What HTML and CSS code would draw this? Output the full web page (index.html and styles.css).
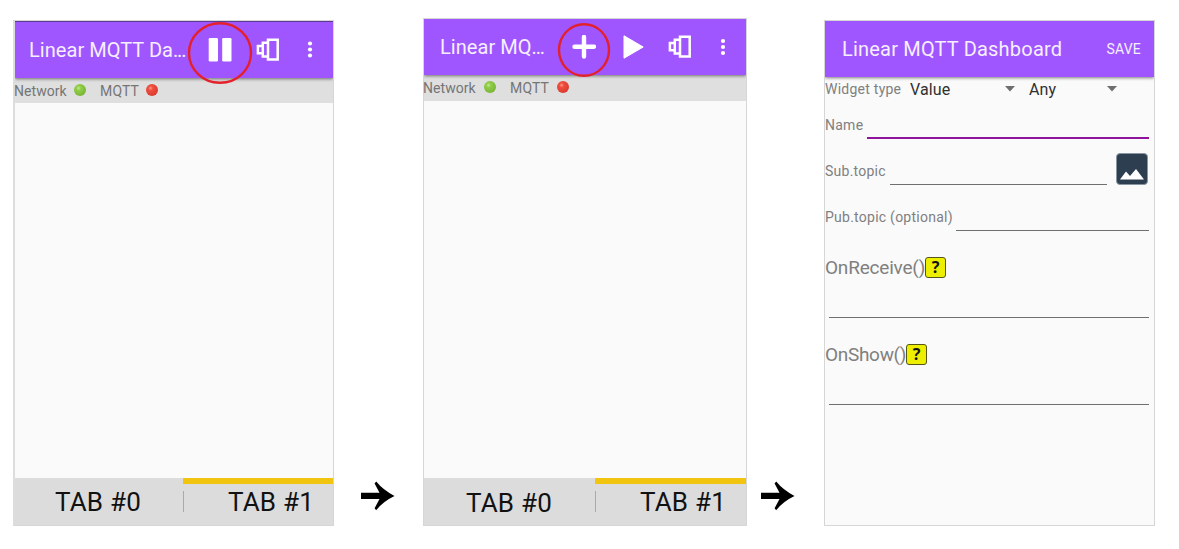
FILE: index.html
```html
<!DOCTYPE html>
<html lang="en">
<head>
<meta charset="utf-8">
<title>Linear MQTT Dashboard</title>
<link rel="stylesheet" href="styles.css">
</head>
<body>
<svg class="defs" width="0" height="0" aria-hidden="true">
  <defs>
    <radialGradient id="green" cx=".38" cy=".35" r=".65"><stop offset="0" stop-color="#c5ec8c"/><stop offset=".3" stop-color="#90cd48"/><stop offset="1" stop-color="#7bb638"/></radialGradient>
    <radialGradient id="red" cx=".38" cy=".35" r=".65"><stop offset="0" stop-color="#ff9a8c"/><stop offset=".3" stop-color="#ee4e3e"/><stop offset="1" stop-color="#dc3c2f"/></radialGradient>
    <symbol id="layers" viewBox="0 0 24 24"><path d="M12 1.700h9.700v19.800H12zM12 4.700H6.800v13.800H12M6.800 8H1.900v7.200h5" fill="none" stroke="#fff" stroke-width="2.500"/></symbol>
    <symbol id="arrow" viewBox="0 0 34 30"><path d="M0 11.700h18.500L13.600 2.500 15.200.6Q22 9 33.500 15 22 20.500 15.200 29.200L13.600 27.200 18.500 18H0z" fill="#000"/></symbol>
  </defs>
</svg>
<main class="steps">
  <section class="phone phone-run">
    <header class="bar">
      <h1 class="title">Linear MQTT Da<span class="dots">...</span></h1>
      <svg class="icon pause" width="24" height="24" viewBox="0 0 24 24"><rect x=".7" y="0" width="9.300" height="23.500" rx="1.300" fill="#fff"/><rect x="14.200" y="0" width="9.300" height="23.500" rx="1.300" fill="#fff"/></svg>
      <svg class="icon layers" width="24" height="24"><use href="#layers"/></svg>
      <svg class="icon more" width="6" height="18" viewBox="0 0 6 18"><circle cx="3" cy="2.500" r="2.100" fill="#fff"/><circle cx="3" cy="8.500" r="2.100" fill="#fff"/><circle cx="3" cy="14.500" r="2.100" fill="#fff"/></svg>
    </header>
    <div class="status"><span class="net">Network</span><svg class="led" width="12" height="12"><circle cx="6" cy="6" r="6" fill="url(#green)"/></svg><span class="mqtt">MQTT</span><svg class="led" width="12" height="12"><circle cx="6" cy="6" r="6" fill="url(#red)"/></svg></div>
    <div class="canvas"></div>
    <nav class="tabs"><div class="tab">TAB #0</div><div class="tab active">TAB #1</div></nav>
    <svg class="ring" width="66" height="64"><ellipse cx="33" cy="32" rx="31" ry="29.800"/></svg>
  </section>
  <svg class="arrow" width="34" height="30"><use href="#arrow"/></svg>
  <section class="phone phone-edit">
    <header class="bar">
      <h1 class="title">Linear MQ<span class="dots">...</span></h1>
      <svg class="icon plus" width="24" height="24" viewBox="0 0 24 24"><path d="M12 2v19.500M2.500 11.700h19.500" stroke="#fff" stroke-width="4.400" stroke-linecap="round"/></svg>
      <svg class="icon play" width="21" height="24" viewBox="0 0 21 24"><path d="M1 .8 20.200 12 1 23.200z" fill="#fff" stroke="#fff" stroke-linejoin="round"/></svg>
      <svg class="icon layers" width="24" height="24"><use href="#layers"/></svg>
      <svg class="icon more" width="6" height="18" viewBox="0 0 6 18"><circle cx="3" cy="3" r="2.100" fill="#fff"/><circle cx="3" cy="9" r="2.100" fill="#fff"/><circle cx="3" cy="15" r="2.100" fill="#fff"/></svg>
    </header>
    <div class="status"><span class="net">Network</span><svg class="led" width="12" height="12"><circle cx="6" cy="6" r="6" fill="url(#green)"/></svg><span class="mqtt">MQTT</span><svg class="led" width="12" height="12"><circle cx="6" cy="6" r="6" fill="url(#red)"/></svg></div>
    <div class="canvas"></div>
    <nav class="tabs"><div class="tab">TAB #0</div><div class="tab active">TAB #1</div></nav>
    <svg class="ring" width="54" height="56"><ellipse cx="27" cy="28" rx="25" ry="25.800"/></svg>
  </section>
  <svg class="arrow" width="34" height="30"><use href="#arrow"/></svg>
  <section class="phone phone-form">
    <header class="bar">
      <h1 class="title">Linear MQTT Dashboard</h1>
      <span class="save">SAVE</span>
    </header>
    <div class="form">
      <div class="row type-row"><span class="label">Widget type</span><span class="select select-type">Value<svg width="10" height="6"><path d="M0 0h10L5 5.500z" fill="#6e6e6e"/></svg></span><span class="select select-mode">Any<svg width="10" height="6"><path d="M0 0h10L5 5.500z" fill="#6e6e6e"/></svg></span></div>
      <div class="row name-row"><span class="label">Name</span><span class="input focused"></span></div>
      <div class="row sub-row"><span class="label">Sub.topic</span><span class="input"></span><svg class="picture" width="32" height="32"><rect x=".5" y=".5" width="31" height="31" rx="3.500" fill="#2c3e50" stroke="#8995a0"/><path d="M4 26.500 10 18.500 14 23 20 16 28 26.500z" fill="#fff"/></svg></div>
      <div class="row pub-row"><span class="label">Pub.topic (optional)</span><span class="input"></span></div>
      <div class="row script-row receive"><span class="script">OnReceive()</span><span class="help">?</span></div>
      <div class="line"></div>
      <div class="row script-row show"><span class="script">OnShow()</span><span class="help">?</span></div>
      <div class="line"></div>
    </div>
  </section>
</main>
</body>
</html>
```

FILE: styles.css
```css
* { box-sizing: border-box; }
body { margin: 0; background: #fff; font-family: Roboto, sans-serif; }
.defs { position: absolute; }
.steps { display: flex; align-items: flex-start; width: 1179px; height: 549px; padding: 18px 0 0 13px; overflow: hidden; }
.phone { position: relative; flex: none; display: flex; flex-direction: column; border: 1px solid #d6d6d6; background: #fafafa; }
.phone-run { width: 321px; height: 506px; margin-top: 2px; border-left-width: 2px; border-left-color: #ddd; }
.phone-edit { width: 324px; height: 508px; }
.phone-form { width: 331px; height: 506px; margin-top: 2px; }
.arrow { flex: none; margin: 463px 28px 0 27px; }
.phone-edit + .arrow { margin: 463px 29px 0 14px; }

.bar { position: relative; z-index: 1; flex: none; display: flex; align-items: center; height: 57px; background: #a056ff; color: #f6efff; box-shadow: 0 1px 3px rgba(0, 0, 0, .5); clip-path: inset(0 0 -6px 0); }
.phone-run .bar { border-top: 1px solid #5c3a94; }
.phone-edit .bar { height: 56px; }
.phone-form .bar { height: 56px; }
.title { flex: none; margin: 0; font-size: 20px; line-height: 24px; font-weight: 400; letter-spacing: .2px; white-space: nowrap; }
.dots { letter-spacing: -1.2px; }
.phone-run .title { width: 193px; padding-left: 14px; letter-spacing: .05px; }
.phone-run .dots { letter-spacing: -1.2px; }
.phone-edit .title { width: 148px; padding-left: 16px; letter-spacing: .05px; }
.phone-form .title { padding-left: 17px; }
.icon { flex: none; }
.phone-run .layers { margin-left: 24px; }
.phone-run .more { margin-left: 27px; }
.play { margin-left: 27px; }
.phone-edit .layers { margin-left: 24px; }
.phone-edit .more { margin-left: 28px; }
.save { margin-left: auto; padding-right: 13px; font-size: 14px; letter-spacing: .2px; }

.status { flex: none; display: flex; align-items: center; height: 25px; background: #dfdfdf; color: #757575; font-size: 14px; letter-spacing: .05px; }
.phone-edit .status { height: 26px; }
.led { margin-top: -2px; }
.net { width: 60px; margin-left: -1px; }
.mqtt { width: 46px; margin-left: 14px; letter-spacing: .2px; }
.phone-edit .net { width: 61px; }
.phone-edit .mqtt { width: 47px; }
.canvas { flex: 1; }

.tabs { flex: none; display: flex; height: 47px; background: #dcdcdc; color: #111; font-size: 26px; letter-spacing: .2px; }
.tab { position: relative; flex: none; width: 168px; padding-left: 40px; line-height: 48px; white-space: nowrap; }
.tab.active { flex: 1; padding-left: 45px; }
.tab.active::before { content: ""; position: absolute; left: 0; top: 0; right: 0; height: 6px; background: #f1c40f; }
.tab.active::after { content: ""; position: absolute; left: 0; top: 13px; width: 1px; height: 21px; background: #aaa; }
.phone-edit .tab { width: 171px; padding-left: 42px; line-height: 50px; }
.phone-edit .tab.active { padding-left: 45px; line-height: 49px; }

.ring { position: absolute; z-index: 2; }
.ring ellipse { fill: none; stroke: #e3202b; stroke-width: 2.4; }
.phone-run .ring { left: 172px; top: 0; }
.phone-edit .ring { left: 133px; top: 3px; }

.form { display: flex; flex-direction: column; }
.row { flex: none; display: flex; }
.label { flex: none; color: #808080; font-size: 14px; line-height: 18px; letter-spacing: .25px; white-space: nowrap; }
.type-row { height: 24px; align-items: center; }
.type-row .label { width: 85px; }
.select { display: flex; align-items: center; justify-content: space-between; color: #303030; font-size: 16px; letter-spacing: .1px; }
.select-type { width: 105px; }
.select-mode { width: 88px; margin-left: 14px; }
.name-row { height: 38px; align-items: flex-end; }
.name-row .label { margin-bottom: 5px; width: 42px; }
.input { flex: 1; border-bottom: 1px solid #6f6f6f; margin-right: 5px; }
.input.focused { border-bottom: 2px solid #8e149b; }
.sub-row { height: 46px; align-items: flex-end; }
.sub-row .label { width: 65px; margin-bottom: 5px; }
.sub-row .input { margin-right: 9px; }
.picture { margin-right: 6px; }
.pub-row { height: 46px; align-items: flex-end; }
.pub-row .label { width: 131px; margin-bottom: 5px; }
.script-row { align-items: center; height: 22px; }
.receive { margin-top: 25px; }
.show { margin-top: 25px; }
.script { color: #808080; font-size: 19px; letter-spacing: -.2px; }
.show .script { letter-spacing: -.3px; }
.help { width: 21px; height: 21px; border: 1px solid #55551a; border-radius: 3px; background: #eeee00; color: #111; font: bold 16px/18px "Noto Sans", sans-serif; text-align: center; }
.line { height: 1px; background: #6f6f6f; margin: 39px 5px 0 4px; }
```
